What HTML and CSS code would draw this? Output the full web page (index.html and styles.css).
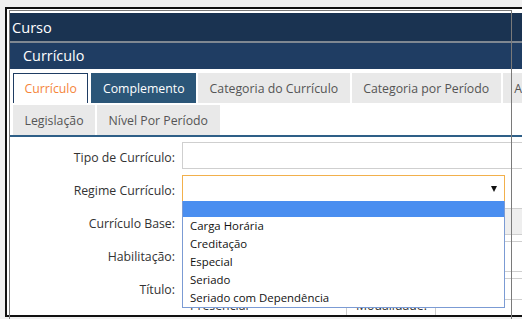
FILE: index.html
```html
<!DOCTYPE html>
<html lang="pt">
<head>
<meta charset="utf-8">
<title>Curso</title>
<link rel="stylesheet" href="styles.css">
</head>
<body>
<div class="window">
  <div class="bar-curso">Curso</div>
  <div class="bar-curriculo">Currículo</div>
  <div class="tabs">
    <div class="tab-row">
      <div class="tab active">Currículo</div>
      <div class="tab dark">Complemento</div>
      <div class="tab">Categoria do Currículo</div>
      <div class="tab">Categoria por Período</div>
      <div class="tab">Ambiente</div>
    </div>
    <div class="tab-row">
      <div class="tab">Legislação</div>
      <div class="tab">Nível Por Período</div>
    </div>
  </div>
  <div class="form">
    <div class="row">
      <div class="label">Tipo de Currículo:</div>
      <div class="input"></div>
    </div>
    <div class="row">
      <div class="label">Regime Currículo:</div>
      <div class="select">
        <span class="arrow"></span>
        <div class="dropdown">
          <div class="opt selected"></div>
          <div class="opt">Carga Horária</div>
          <div class="opt">Creditação</div>
          <div class="opt">Especial</div>
          <div class="opt">Seriado</div>
          <div class="opt">Seriado com Dependência</div>
        </div>
      </div>
    </div>
    <div class="row">
      <div class="label">Currículo Base:</div>
      <div class="input disabled"></div>
    </div>
    <div class="row tall">
      <div class="label">Habilitação:</div>
      <div class="input"></div>
    </div>
    <div class="row short">
      <div class="label">Título:</div>
      <div class="input"></div>
    </div>
    <div class="row-mod">
      <div class="mod-value">Presencial</div>
      <div class="mod-label">Modalidade:</div>
    </div>
  </div>
</div>
<div class="frame"></div>
</body>
</html>
```

FILE: styles.css
```css
* { box-sizing: border-box; }

body {
  margin: 0;
  width: 522px;
  height: 319px;
  overflow: hidden;
  background: #f0f0f0;
  font-family: "Open Sans", "Noto Sans", sans-serif;
  position: relative;
}

.window {
  margin: 7px 0 0 5px;
  height: 310px;
  border: 2px solid #111;
  border-right: 0;
  padding: 4px 0 0 3px;
  background: #fff;
  overflow: hidden;
}

.frame {
  position: absolute;
  left: 9px;
  top: 10px;
  width: 503px;
  bottom: 0;
  border: 1px solid #7a7a7a;
  border-bottom: 0;
  pointer-events: none;
}

.bar-curso {
  width: 600px;
  height: 30px;
  background: #1a3351;
  border-bottom: 2px solid #7f8892;
  color: #fff;
  font-size: 14.6px;
  line-height: 28px;
  padding-left: 2px;
}

.bar-curriculo {
  width: 600px;
  height: 26px;
  background: #1f3d63;
  color: #fff;
  font-size: 14.4px;
  line-height: 26px;
  padding-left: 13px;
}

.tabs {
  padding: 4px 0 0 3px;
  display: flex;
  flex-direction: column;
  gap: 2px;
  border-bottom: 2px solid #2e5f87;
  width: 600px;
}

.tab-row {
  display: flex;
  gap: 2px;
}

.tab {
  flex-shrink: 0;
  height: 30px;
  padding: 2px 11.5px 0;
  line-height: 28px;
  font-size: 12.3px;
  color: #555;
  background: #e9e9e9;
  white-space: nowrap;
}

.tab.active {
  background: #fff;
  color: #f5853a;
  border: 1px solid #1f3d63;
  border-bottom: 0;
  padding: 1px 10.5px 0;
  margin-right: 1px;
}

.tab.dark {
  background: #2b5678;
  color: #fff;
}

.form {
  padding-top: 5px;
  display: flex;
  flex-direction: column;
  gap: 6px;
}

.row {
  display: grid;
  grid-template-columns: 165px 400px;
  column-gap: 7px;
  height: 27px;
}

.row.tall { height: 31px; }
.row.short { height: 20px; }

.label {
  text-align: right;
  font-size: 12.3px;
  line-height: 20px;
  padding-top: 6px;
  color: #333;
  white-space: nowrap;
}

.row.short .label { padding-top: 2px; }

.input {
  border: 1px solid #cfcfcf;
  background: #fff;
}

.input.disabled { background: #eee; }

.select {
  position: relative;
  width: 323px;
  height: 27px;
  border: 1px solid #f2b04c;
  background: #fff;
  display: flex;
  align-items: center;
  justify-content: flex-end;
  padding-right: 7px;
}

.arrow {
  width: 0;
  height: 0;
  border-left: 3.5px solid transparent;
  border-right: 3.5px solid transparent;
  border-top: 6px solid #111;
}

.dropdown {
  position: absolute;
  top: 100%;
  left: -1px;
  width: 323px;
  background: #fff;
  border: 1px solid #7b9bd4;
  border-top: 0;
  padding-bottom: 0;
  font-size: 11.4px;
  color: #111;
  z-index: 2;
}

.opt {
  line-height: 18px;
  padding-left: 7px;
  white-space: nowrap;
}

.opt.selected {
  height: 16px;
  background: #4a8ef0;
}

.row-mod {
  display: flex;
  margin-top: -7px;
  margin-left: 172px;
  height: 20px;
  font-size: 12.3px;
  color: #333;
  line-height: 18px;
}

.mod-value {
  width: 164px;
  padding-left: 8px;
}

.mod-label {
  width: 90px;
  border-left: 1px solid #ccc;
  border-right: 1px solid #ccc;
  text-align: right;
  padding-right: 8px;
}
```
